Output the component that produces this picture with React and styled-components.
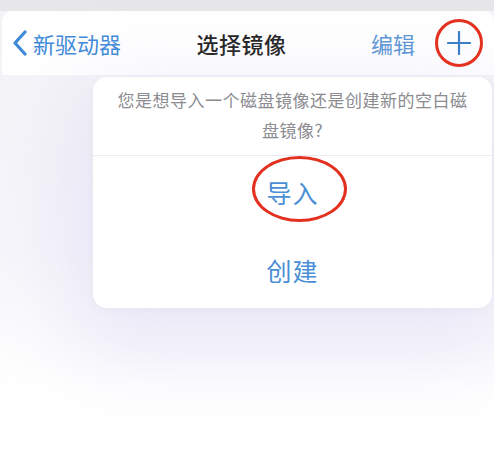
import styled, { createGlobalStyle } from 'styled-components';

const GlobalStyle = createGlobalStyle`
  body {
    margin: 0;
    background: #ffffff;
    font-family: "Noto Sans CJK SC", "Noto Sans", sans-serif;
  }
`;

const Screen = styled.div`
  width: 494px;
  height: 457px;
  overflow: hidden;
  display: flex;
  flex-direction: column;
  background: linear-gradient(180deg, #f3f3f7 0%, #f6f5fa 55%, #ffffff 85%);
`;

const TopStrip = styled.div`
  height: 11px;
  background: #e7e7ea;
`;

const NavBar = styled.nav`
  height: 64px;
  margin-left: 2px;
  background: #ffffff;
  border-radius: 10px 10px 0 0;
  display: grid;
  grid-template-columns: 1fr auto 1fr;
  align-items: center;
  padding: 0 23px 0 10px;
`;

const BackButton = styled.div`
  display: flex;
  align-items: center;
  gap: 5px;
  color: #3f8ad8;
  font-size: 22px;
`;

const Title = styled.div`
  font-size: 22px;
  font-weight: 500;
  color: #222;
  letter-spacing: 0.5px;
`;

const RightGroup = styled.div`
  display: flex;
  align-items: center;
  justify-content: flex-end;
  gap: 32px;
`;

const NavLink = styled.span`
  color: #5a94d4;
  font-size: 22px;
`;

const PlusButton = styled.span`
  position: relative;
  width: 24px;
  height: 24px;
  display: flex;
`;

const Mark = styled.span`
  position: absolute;
  box-sizing: border-box;
  border: 3px solid #e3301f;
  border-radius: 50%;
  pointer-events: none;
`;

const Content = styled.main`
  flex: 1;
  padding: 2px 2px 0 93px;
`;

const Popover = styled.section`
  background: #ffffff;
  border-radius: 14px;
  box-shadow: 0 30px 80px 20px rgba(205, 200, 238, 0.35), 0 2px 10px rgba(0, 0, 0, 0.03);
  overflow: hidden;
`;

const Message = styled.p`
  margin: 0;
  padding: 8px 20px 10px;
  font-size: 17px;
  letter-spacing: 0.5px;
  line-height: 30px;
  color: #8b8b90;
  text-align: center;
  border-bottom: 1px solid #ececf0;
`;

const Action = styled.div`
  position: relative;
  height: 76px;
  display: flex;
  align-items: center;
  justify-content: center;
  font-size: 25px;
  color: #4b8fd6;
  letter-spacing: 1px;
`;

const ActionLabel = styled.span`
  position: relative;
  top: ${p => p.$shift || 0}px;
`;

const Chevron = () => (
  <svg width="16" height="26" viewBox="0 0 16 26">
    <path d="M13 2 L3 13 L13 24" fill="none" stroke="#3f8ad8" strokeWidth="3.2" strokeLinecap="round" strokeLinejoin="round" />
  </svg>
);

const Plus = () => (
  <svg width="24" height="24" viewBox="0 0 24 24">
    <path d="M12 1 V23 M1 12 H23" stroke="#3d7fc6" strokeWidth="2.2" strokeLinecap="round" />
  </svg>
);

export default function App() {
  return (
    <>
      <GlobalStyle />
      <Screen>
        <TopStrip />
        <NavBar>
          <BackButton>
            <Chevron />
            <span>新驱动器</span>
          </BackButton>
          <Title>选择镜像</Title>
          <RightGroup>
            <NavLink>编辑</NavLink>
            <PlusButton>
              <Plus />
              <Mark style={{ left: -12, top: -12, width: 48, height: 48 }} />
            </PlusButton>
          </RightGroup>
        </NavBar>
        <Content>
          <Popover>
            <Message>您是想导入一个磁盘镜像还是创建新的空白磁盘镜像?</Message>
            <Action>
              <ActionLabel $shift={-2}>导入</ActionLabel>
              <Mark style={{ left: 159, top: 0, width: 95, height: 66 }} />
            </Action>
            <Action>
              <ActionLabel>创建</ActionLabel>
            </Action>
          </Popover>
        </Content>
      </Screen>
    </>
  );
}
